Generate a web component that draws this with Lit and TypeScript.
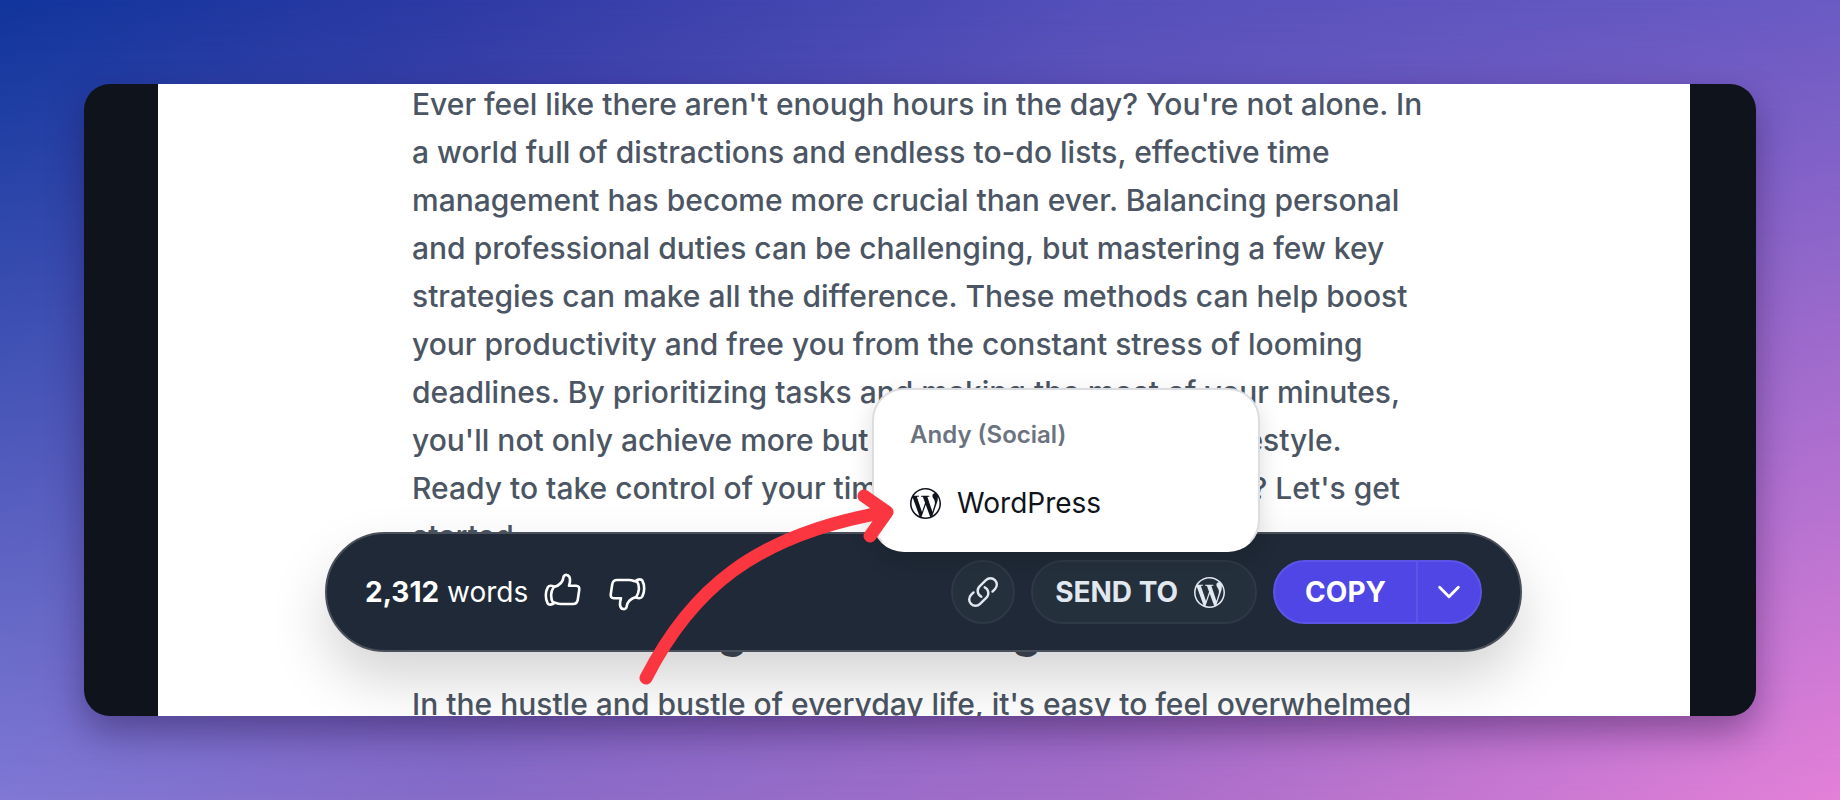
import { LitElement, html, css, svg } from "lit";
import { customElement } from "lit/decorators.js";

const PARAGRAPH = [
  "Ever feel like there aren't enough hours in the day? You're not alone. In",
  "a world full of distractions and endless to-do lists, effective time",
  "management has become more crucial than ever. Balancing personal",
  "and professional duties can be challenging, but mastering a few key",
  "strategies can make all the difference. These methods can help boost",
  "your productivity and free you from the constant stress of looming",
  "deadlines. By prioritizing tasks and making the most of your minutes,",
  "you'll not only achieve more but also sustain a balanced lifestyle.",
  "Ready to take control of your time and expand productivity? Let's get",
  "started.",
];

const wordpress = html`<svg class="icon" viewBox="0 0 24 24" width="31" height="31" fill="currentColor" aria-hidden="true">
  ${svg`<path d="M21.469 6.825c.84 1.537 1.318 3.3 1.318 5.175 0 3.979-2.156 7.456-5.363 9.325l3.295-9.527c.615-1.54.82-2.771.82-3.864 0-.405-.026-.78-.07-1.11m-7.981.105c.647-.03 1.232-.105 1.232-.105.582-.075.514-.93-.067-.899 0 0-1.755.135-2.88.135-1.064 0-2.85-.15-2.85-.15-.585-.03-.661.855-.075.885 0 0 .54.061 1.125.09l1.68 4.605-2.37 7.08L5.354 6.9c.649-.03 1.234-.1 1.234-.1.585-.075.516-.93-.065-.896 0 0-1.746.138-2.874.138-.2 0-.438-.008-.69-.015C4.911 3.15 8.235 1.215 12 1.215c2.809 0 5.365 1.072 7.286 2.833-.046-.003-.091-.009-.141-.009-1.06 0-1.812.923-1.812 1.914 0 .89.513 1.643 1.06 2.531.411.72.89 1.643.89 2.977 0 .915-.354 1.994-.821 3.479l-1.075 3.585-3.9-11.61.001.014zM12 22.784c-1.059 0-2.081-.153-3.048-.437l3.237-9.406 3.315 9.087c.024.053.05.101.078.149-1.12.393-2.325.609-3.582.609M1.211 12c0-1.564.336-3.05.935-4.39L7.29 21.709C3.694 19.96 1.212 16.271 1.211 12M12 0C5.385 0 0 5.385 0 12s5.385 12 12 12 12-5.385 12-12S18.615 0 12 0"/>`}
</svg>`;

const thumb = svg`
  <path d="M10 14C15 12.500 19 9 19.500 4C20 0.800 25.500 1 26 6C26.300 9 25.500 11 25 12.800H32C34.800 12.800 35.600 14.500 35.200 17L33.800 26.500C33.300 30 31.500 31 29 31H17C13.500 31 12 29.800 9 29.200"/>
  <path d="M10 13.400C7 12.400 4.700 12.500 3.700 14.500C1.200 19 1.200 26 3.700 30.500C4.700 32 7 31.800 9.500 30.800C6 25 6.500 19 10 13.400Z"/>`;

@customElement("app-root")
export class AppRoot extends LitElement {
  static styles = css`
    :host {
      display: block;
      font-family: Inter, "Liberation Sans", sans-serif;
    }
    * { box-sizing: border-box; }
    .backdrop {
      position: relative;
      height: 100vh;
      padding: 84px;
      background: linear-gradient(90deg, #10359c 0%, #2e3aa5 25%, #5550ba 60%, #6a5bc4 100%);
    }
    .backdrop::before {
      content: "";
      position: absolute;
      inset: 0;
      background: linear-gradient(90deg, #8078d4 0%, #876bc8 25%, #a56dc8 60%, #e480d8 100%);
      -webkit-mask-image: linear-gradient(180deg, transparent, #000);
      mask-image: linear-gradient(180deg, transparent, #000);
    }
    .window {
      position: relative;
      height: 100%;
      padding: 0 66px 0 74px;
      border-radius: 26px;
      background: #0f131c;
      box-shadow: 0 16px 36px rgba(30, 10, 60, 0.4);
    }
    .page {
      height: 100%;
      overflow: hidden;
      background: #fff;
      padding: 0 254px;
      color: #4b5563;
      font-size: 30px;
      font-weight: 450;
      line-height: 48px;
    }
    .scrolled { margin-top: -4px; }
    .line { display: block; white-space: nowrap; }
    p { margin: 0; }
    h2 {
      margin: 42px 0 22px;
      font-size: 46px;
      line-height: 56px;
      font-weight: 700;
      color: #3f4654;
      white-space: nowrap;
    }
    .toolbar {
      position: absolute;
      left: 241px;
      right: 234px;
      bottom: 64px;
      height: 120px;
      border: 2px solid #4a505b;
      border-radius: 60px;
      background: #1f2937;
      box-shadow: 0 28px 56px rgba(0, 0, 0, 0.17);
      display: flex;
      align-items: center;
      gap: 16px;
      padding: 0 38px;
      color: #fff;
      font-size: 28px;
      line-height: 36px;
    }
    .count { white-space: nowrap; }
    .votes { display: flex; gap: 26px; flex: 1; }
    .flip { transform: rotate(180deg); }
    .icon { display: block; flex: none; }
    button {
      font: inherit;
      border: 0;
      background: none;
      color: inherit;
      padding: 0;
      display: flex;
      align-items: center;
      justify-content: center;
    }
    .pill {
      height: 64px;
      border: 2px solid #2e3945;
      border-radius: 32px;
      background: #25303d;
      color: #e2e8f0;
      font-weight: 700;
    }
    .link { width: 64px; }
    .send { gap: 16px; padding: 0 30px 0 22px; }
    .anchor { position: relative; }
    .split {
      display: flex;
      height: 64px;
      border: 2px solid #5b54e6;
      border-radius: 32px;
      background: #4f46e5;
      font-weight: 700;
    }
    .copy { padding: 0 30px; border-right: 2px solid #5d55e8; }
    .more { width: 62px; }
    .menu {
      position: absolute;
      right: -3px;
      bottom: 72px;
      width: 388px;
      border: 2px solid #dcdde0;
      border-bottom-color: #fff;
      border-radius: 32px;
      background: #fff;
      box-shadow: 0 8px 24px rgba(0, 0, 0, 0.14);
      padding: 27px 36px 29px;
      color: #0f131c;
    }
    .group {
      color: #6b7280;
      font-size: 24px;
      font-weight: 600;
      margin-bottom: 32px;
    }
    .item { gap: 16px; }
    .arrow {
      position: absolute;
      left: 303px;
      top: -54px;
      pointer-events: none;
    }
  `;

  render() {
    return html`<div class="backdrop"><main class="window">
      <article class="page"><div class="scrolled">
        <p>${PARAGRAPH.map((l) => html`<span class="line">${l}</span>`)}</p>
        <h2>Understanding the Challenge</h2>
        <p><span class="line">In the hustle and bustle of everyday life, it's easy to feel overwhelmed</span></p>
      </div></article>
      <div class="toolbar">
        <span class="count"><b>2,312</b> words</span>
        <div class="votes">
          <button aria-label="Good result">
            <svg class="icon" viewBox="0 0 38 38" width="38" height="38" fill="none" stroke="currentColor" stroke-width="2.600" stroke-linejoin="round">${thumb}</svg>
          </button>
          <button aria-label="Bad result">
            <svg class="icon flip" viewBox="0 0 38 38" width="38" height="38" fill="none" stroke="currentColor" stroke-width="2.600" stroke-linejoin="round">${thumb}</svg>
          </button>
        </div>
        <button class="pill link" aria-label="Copy link">
          <svg class="icon" viewBox="0 0 24 24" width="34" height="34" fill="none" stroke="currentColor" stroke-width="1.700" stroke-linecap="round" stroke-linejoin="round">
            <path d="M13.190 8.688a4.500 4.500 0 0 1 1.242 7.244l-4.500 4.500a4.500 4.500 0 0 1-6.364-6.364l1.757-1.757m13.350-.622 1.757-1.757a4.500 4.500 0 0 0-6.364-6.364l-4.500 4.500a4.500 4.500 0 0 0 1.242 7.244"/>
          </svg>
        </button>
        <div class="anchor">
          <button class="pill send" aria-haspopup="menu" aria-expanded="true">SEND TO ${wordpress}</button>
          <div class="menu">
            <div class="group">Andy (Social)</div>
            <button class="item">${wordpress} WordPress</button>
          </div>
        </div>
        <div class="split">
          <button class="copy">COPY</button>
          <button class="more" aria-label="More copy options">
            <svg class="icon" viewBox="0 0 24 24" width="30" height="30" fill="none" stroke="currentColor" stroke-width="2.300" stroke-linecap="round" stroke-linejoin="round"><path d="m19.500 8.250-7.500 7.500-7.500-7.500"/></svg>
          </button>
        </div>
        <svg class="arrow" viewBox="630 480 280 210" width="280" height="210" fill="none" stroke="#fb3640" stroke-width="13" stroke-linecap="round" stroke-linejoin="round" aria-hidden="true">
          <path d="M646 678C690 592 752 535 886 512"/>
          <path d="M864 496L887 512L870 536"/>
        </svg>
      </div>
    </main></div>`;
  }
}
